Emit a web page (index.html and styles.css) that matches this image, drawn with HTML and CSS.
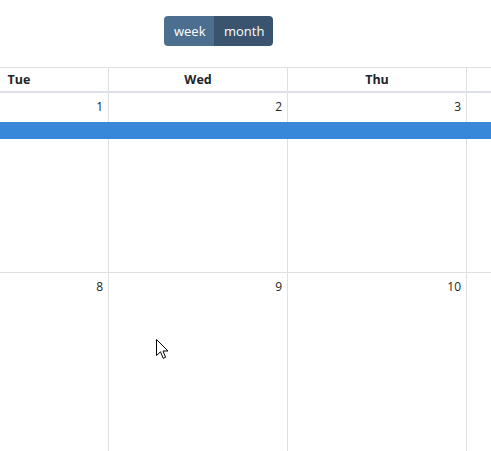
FILE: index.html
```html
<!DOCTYPE html>
<html>
<head>
<meta charset="utf-8">
<link rel="stylesheet" href="styles.css">
</head>
<body>
<div class="toolbar">
  <div class="btn-group">
    <button class="btn btn-week">week</button>
    <button class="btn btn-month">month</button>
  </div>
</div>
<div class="cal">
  <div class="head">
    <div class="hcell">Tue</div>
    <div class="hcell">Wed</div>
    <div class="hcell">Thu</div>
    <div class="hcell"></div>
  </div>
  <div class="week">
    <div class="day c1">1</div>
    <div class="day c2">2</div>
    <div class="day c3">3</div>
    <div class="day c4"></div>
    <div class="event"></div>
  </div>
  <div class="week">
    <div class="day c1">8</div>
    <div class="day c2">9</div>
    <div class="day c3">10</div>
    <div class="day c4"></div>
  </div>
</div>
<svg class="cursor" width="13" height="21" viewBox="0 0 13 21">
  <path d="M0.5 0.5 L0.5 16.5 L4.5 12.8 L7.2 19.3 L9.6 18.3 L7 12 L12 12 Z" fill="#fff" stroke="#000" stroke-width="1"/>
</svg>
</body>
</html>
```
FILE: styles.css
```css
html, body {
  margin: 0;
  padding: 0;
  background: #fff;
  overflow: hidden;
  font-family: "Open Sans", "Noto Sans", sans-serif;
  color: #212529;
}
.toolbar {
  display: flex;
  padding: 16px 0 0 164px;
  height: 67px;
  box-sizing: border-box;
}
.btn-group {
  display: flex;
  height: 30px;
}
.btn {
  border: 0;
  margin: 0;
  font-family: inherit;
  font-size: 13px;
  color: #fff;
  padding: 0 10px;
  height: 30px;
  line-height: 30px;
}
.btn-week {
  background: #4c6f90;
  border-radius: 4px 0 0 4px;
  width: 50px;
}
.btn-month {
  background: #3a546f;
  border-radius: 0 4px 4px 0;
  width: 59px;
}
.cal {
  margin-left: -70px;
  width: 716px;
}
.head {
  display: grid;
  grid-template-columns: repeat(4, 179px);
  border-top: 1px solid #dde0e4;
  border-bottom: 2px solid #dde0e4;
}
.hcell {
  box-sizing: border-box;
  border-right: 1px solid #dde0e4;
  height: 23px;
  line-height: 23px;
  text-align: center;
  font-weight: 700;
  font-size: 12.5px;
}
.week {
  display: grid;
  grid-template-columns: repeat(4, 179px);
  grid-template-rows: 26px 17px 1fr;
  height: 180px;
}
.day {
  grid-row: 1 / 4;
  box-sizing: border-box;
  border-right: 1px solid #dde0e4;
  border-bottom: 1px solid #dde0e4;
  text-align: right;
  padding: 5px 5px 0 0;
  font-size: 12px;
  line-height: 18px;
}
.c1 { grid-column: 1; }
.c2 { grid-column: 2; }
.c3 { grid-column: 3; }
.c4 { grid-column: 4; }
.event {
  grid-column: 1 / -1;
  grid-row: 2;
  margin-top: 3px;
  height: 17px;
  background: #3788d8;
}
.cursor {
  position: absolute;
  left: 156px;
  top: 339px;
}
```
